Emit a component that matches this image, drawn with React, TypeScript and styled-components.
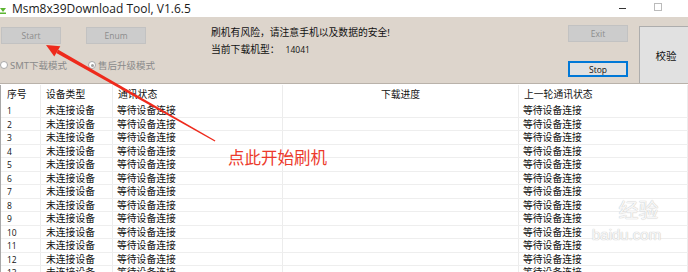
import React from 'react';
import styled, { createGlobalStyle } from 'styled-components';

const GlobalStyle = createGlobalStyle`
  html, body {
    margin: 0;
    padding: 0;
    background: #ffffff;
  }
  body {
    font-family: "Noto Sans", "Noto Sans CJK SC", sans-serif;
  }
`;

const CJK = `"Noto Sans", "Noto Sans CJK SC", sans-serif`;

const Window = styled.div`
  position: relative;
  width: 688px;
  height: 272px;
  overflow: hidden;
  background: #ffffff;
`;

const TitleBar = styled.div`
  height: 17px;
  display: flex;
  align-items: center;
  background: #ffffff;
`;

const AppIcon = styled.div`
  width: 6px;
  height: 10px;
  margin-right: 6px;
  display: flex;
  align-items: center;
`;

const Title = styled.div`
  font-family: "Open Sans", sans-serif;
  font-size: 12px;
  color: #1a1a1a;
  flex: 1;
  line-height: 17px;
`;

const WinCtrl = styled.div<{ $w: number }>`
  width: ${(p) => p.$w}px;
  height: 17px;
  display: flex;
  align-items: center;
  justify-content: center;
`;

const MinBar = styled.div`
  width: 7px;
  height: 1px;
  background: #333;
`;

const MaxBox = styled.div`
  width: 6px;
  height: 6px;
  border: 1px solid #bbb;
  margin-top: -4px;
`;

const Toolbar = styled.div`
  height: 66px;
  display: flex;
  background: #ddd5cc;
  border-bottom: 1px solid #b9b2aa;
`;

const LeftGroup = styled.div`
  width: 211px;
  display: flex;
  flex-direction: column;
`;

const ButtonRow = styled.div`
  display: flex;
  gap: 25px;
  margin: 10px 0 0 1px;
`;

const GrayButton = styled.div<{ $active?: boolean }>`
  width: 58px;
  height: ${(p) => (p.$active ? 14 : 15)}px;
  box-sizing: content-box;
  background: ${(p) => (p.$active ? '#e1e1e1' : '#cccccc')};
  border: ${(p) => (p.$active ? '1px solid #0078d7' : '1px solid #c2c2c2')};
  box-shadow: ${(p) => (p.$active ? 'inset 0 0 0 1px #0078d7' : 'none')};
  color: ${(p) => (p.$active ? '#111' : '#8d8d8d')};
  font-family: "Open Sans", sans-serif;
  font-size: 8.5px;
  display: flex;
  align-items: center;
  justify-content: center;
`;

const RadioRow = styled.div`
  display: flex;
  align-items: center;
  margin-top: 15px;
  height: 12px;
`;

const RadioItem = styled.div<{ $w: number }>`
  width: ${(p) => p.$w}px;
  display: flex;
  align-items: center;
  gap: 2px;
  font-family: ${CJK};
  font-size: 9.5px;
  color: #8a8a8a;
`;

const RadioDot = styled.div<{ $checked?: boolean }>`
  width: 8px;
  height: 8px;
  border-radius: 50%;
  background: #ffffff;
  border: 1px solid #a8a8a8;
  box-sizing: border-box;
  position: relative;
  flex: none;
  &::after {
    content: '';
    display: ${(p) => (p.$checked ? 'block' : 'none')};
    position: absolute;
    left: 1.5px;
    top: 1.5px;
    width: 3px;
    height: 3px;
    border-radius: 50%;
    background: #a0a0a0;
  }
`;

const Info = styled.div`
  flex: 1;
  padding-top: 9px;
  display: flex;
  flex-direction: column;
  gap: 3px;
  font-family: ${CJK};
  font-size: 9.8px;
  color: #111;
`;

const InfoLine = styled.div`
  height: 14px;
  line-height: 14px;
  white-space: nowrap;
`;

const Model = styled.span`
  font-family: "Open Sans", sans-serif;
  font-size: 8.5px;
  margin-left: 6px;
`;

const SideButtons = styled.div`
  width: 59px;
  margin-right: 12px;
  display: flex;
  flex-direction: column;
  justify-content: space-between;
  padding: 8px 0 6px;
`;

const VerifyButton = styled.div`
  width: 44px;
  margin-top: 9px;
  background: #e1e1e1;
  border: 1px solid #adadad;
  border-right: none;
  border-bottom: none;
  display: flex;
  align-items: center;
  justify-content: center;
  padding-left: 4px;
  font-family: ${CJK};
  font-size: 10.5px;
  color: #111;
`;

const Table = styled.div`
  background: #ffffff;
  border-left: 1px solid #a8a8a8;
  margin-top: 1px;
`;

const COLS = '40px 72px 170px 236px 1fr';

const HeaderRow = styled.div`
  display: grid;
  grid-template-columns: ${COLS};
  height: 19px;
`;

const HeaderCell = styled.div<{ $center?: boolean; $pad?: number }>`
  font-family: ${CJK};
  font-size: 9.8px;
  color: #111;
  line-height: 19px;
  padding-left: ${(p) => (p.$center ? 0 : p.$pad ?? 5)}px;
  text-align: ${(p) => (p.$center ? 'center' : 'left')};
  border-right: 1px solid #ececec;
  white-space: nowrap;
`;

const Row = styled.div`
  display: grid;
  grid-template-columns: ${COLS};
  height: 13.5px;
  box-sizing: border-box;
  border-bottom: 1px solid #eeeeee;
`;

const Cell = styled.div<{ $pad: number }>`
  font-family: ${CJK};
  font-size: 9.8px;
  color: #111;
  line-height: 13px;
  padding-left: ${(p) => p.$pad}px;
  border-right: 1px solid #ececec;
  white-space: nowrap;
  overflow: hidden;
`;

const NumCell = styled(Cell)`
  font-family: "Open Sans", sans-serif;
  font-size: 8.5px;
`;

const Overlay = styled.svg`
  position: absolute;
  left: 0;
  top: 0;
  pointer-events: none;
`;

const Callout = styled.div`
  position: absolute;
  left: 228px;
  top: 145px;
  font-family: "Noto Sans CJK SC", sans-serif;
  font-size: 16.5px;
  color: #ec3a2c;
  white-space: nowrap;
`;

const Watermark = styled.div`
  position: absolute;
  left: 572px;
  top: 198px;
  display: flex;
  flex-direction: column;
  align-items: center;
  color: rgba(255, 255, 255, 0.85);
  text-shadow: 0 0 1px #c8c8c8, 0 0 1px #c8c8c8;
  pointer-events: none;
`;

const WmTop = styled.div`
  font-family: "Noto Sans CJK SC", sans-serif;
  font-size: 20px;
  line-height: 24px;
  padding-left: 44px;
`;

const WmBottom = styled.div`
  font-family: "Liberation Sans", sans-serif;
  font-size: 15px;
  line-height: 18px;
  padding-left: 20px;
  margin-top: 4px;
`;

const rows = Array.from({ length: 13 }, (_, i) => i + 1);

export default function App() {
  return (
    <Window>
      <GlobalStyle />
      <TitleBar>
        <AppIcon>
          <svg width="6" height="10" viewBox="0 0 6 10">
            <path d="M0 4 L3 8 L6 4 Z" fill="#5cb531" />
            <rect x="0" y="8.5" width="6" height="1.5" fill="#5cb531" />
          </svg>
        </AppIcon>
        <Title>Msm8x39Download Tool, V1.6.5</Title>
        <WinCtrl $w={12}>
          <MinBar />
        </WinCtrl>
        <WinCtrl $w={60}>
          <MaxBox />
        </WinCtrl>
      </TitleBar>

      <Toolbar>
        <LeftGroup>
          <ButtonRow>
            <GrayButton>Start</GrayButton>
            <GrayButton>Enum</GrayButton>
          </ButtonRow>
          <RadioRow>
            <RadioItem $w={88}>
              <RadioDot />
              SMT下载模式
            </RadioItem>
            <RadioItem $w={110}>
              <RadioDot $checked />
              售后升级模式
            </RadioItem>
          </RadioRow>
        </LeftGroup>
        <Info>
          <InfoLine>刷机有风险，请注意手机以及数据的安全!</InfoLine>
          <InfoLine>
            当前下载机型：<Model>14041</Model>
          </InfoLine>
        </Info>
        <SideButtons>
          <GrayButton>Exit</GrayButton>
          <GrayButton $active>Stop</GrayButton>
        </SideButtons>
        <VerifyButton>校验</VerifyButton>
      </Toolbar>

      <Table>
        <HeaderRow>
          <HeaderCell $pad={6}>序号</HeaderCell>
          <HeaderCell>设备类型</HeaderCell>
          <HeaderCell>通讯状态</HeaderCell>
          <HeaderCell $center>下载进度</HeaderCell>
          <HeaderCell>上一轮通讯状态</HeaderCell>
        </HeaderRow>
        {rows.map((n) => (
          <Row key={n}>
            <NumCell $pad={6}>{n}</NumCell>
            <Cell $pad={5}>未连接设备</Cell>
            <Cell $pad={4}>等待设备连接</Cell>
            <Cell $pad={4}></Cell>
            <Cell $pad={4}>等待设备连接</Cell>
          </Row>
        ))}
      </Table>

      <Overlay width="688" height="272" viewBox="0 0 688 272">
        <polygon points="46,45 60.3,46.2 54.3,56.6" fill="#ee2a1c" />
        <polygon points="56.3,53.1 58.3,49.7 215.4,140.6 214.8,141.4" fill="#ee2a1c" />
      </Overlay>
      <Callout>点此开始刷机</Callout>

      <Watermark>
        <WmTop>经验</WmTop>
        <WmBottom>baidu.com</WmBottom>
      </Watermark>
    </Window>
  );
}
